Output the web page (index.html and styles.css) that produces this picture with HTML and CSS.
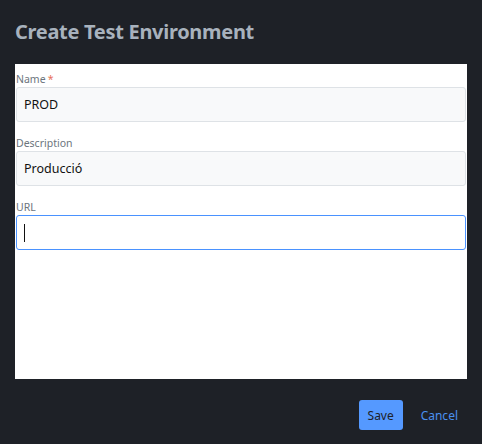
FILE: index.html
```html
<!DOCTYPE html>
<html>
<head>
<meta charset="utf-8">
<link rel="stylesheet" href="styles.css">
</head>
<body>
<div class="dialog">
  <h1 class="title">Create Test Environment</h1>
  <div class="panel">
    <div class="field">
      <label class="label">Name<span class="req">*</span></label>
      <div class="input">PROD</div>
    </div>
    <div class="field">
      <label class="label">Description</label>
      <div class="input">Producció</div>
    </div>
    <div class="field">
      <label class="label">URL</label>
      <div class="input focus"><span class="caret"></span></div>
    </div>
  </div>
  <div class="actions">
    <button class="btn save">Save</button>
    <button class="btn cancel">Cancel</button>
  </div>
</div>
</body>
</html>
```
FILE: styles.css
```css
html, body {
  margin: 0;
  padding: 0;
  background: #1e2127;
  width: 482px;
  height: 444px;
  overflow: hidden;
  font-family: "Noto Sans", "Open Sans", sans-serif;
}
.dialog {
  padding: 0 15px;
}
.title {
  margin: 0;
  height: 64px;
  line-height: 64px;
  font-size: 20px;
  font-weight: 700;
  color: #a8b2bd;
  letter-spacing: -0.3px;
}
.panel {
  background: #ffffff;
  height: 315px;
  padding: 8px 1px 0 1px;
  box-sizing: border-box;
}
.field {
  display: flex;
  flex-direction: column;
  margin-bottom: 14px;
}
.label {
  font-size: 10.5px;
  line-height: 15px;
  color: #6c757d;
  height: 15px;
}
.req {
  color: #e8705a;
  margin-left: 2px;
}
.input {
  height: 35px;
  box-sizing: border-box;
  background: #f8f9fa;
  border: 1px solid #dee2e6;
  border-radius: 3px;
  padding: 0 7px;
  display: flex;
  align-items: center;
  font-size: 12.5px;
  color: #111;
}
.input.focus {
  background: #ffffff;
  border-color: #4a92ff;
}
.caret {
  display: block;
  width: 1px;
  height: 18px;
  background: #111;
}
.actions {
  display: flex;
  justify-content: flex-end;
  align-items: center;
  padding-top: 21px;
  gap: 8px;
}
.btn {
  font-family: "Noto Sans", "Open Sans", sans-serif;
  font-size: 12px;
  border: none;
  border-radius: 3px;
  height: 30px;
  cursor: pointer;
}
.save {
  background: #5599ff;
  color: #1e2127;
  width: 44px;
  padding: 0;
}
.cancel {
  background: transparent;
  color: #4a90f0;
  padding: 0 9px 0 10px;
}
```
